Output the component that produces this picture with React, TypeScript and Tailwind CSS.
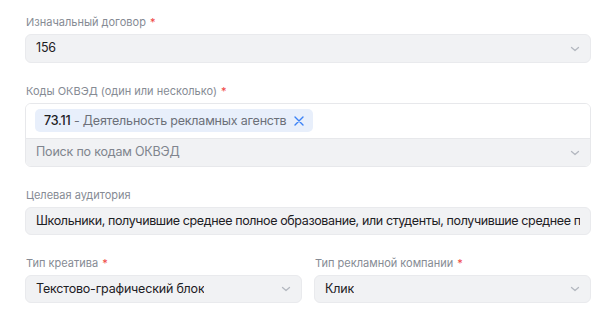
import React from "react";

const Chevron = () => (
  <svg width="12" height="12" viewBox="0 0 12 12" fill="none" className="shrink-0">
    <path d="M2.5 4.5L6 7.5L9.5 4.5" stroke="#b4b8c0" strokeWidth="1.3" strokeLinecap="round" strokeLinejoin="round" />
  </svg>
);

const Label = ({ children, required }: { children: React.ReactNode; required?: boolean }) => (
  <div className="text-[11px] leading-[16px] text-[#868b94] mb-[4px] pl-[1px]">
    {children}
    {required && <span className="text-[#ef4444] ml-[4px]">*</span>}
  </div>
);

const Select = ({ value, h }: { value: string; h: string }) => (
  <div className={`${h} flex items-center justify-between pl-[10px] pr-[9px] rounded-[6px] bg-[#f1f2f4] border border-[#e9eaed]`}>
    <span className="text-[12.5px] tracking-[-0.2px] text-[#1d2024] truncate">{value}</span>
    <Chevron />
  </div>
);

export default function App() {
  return (
    <div className="w-[616px] h-[328px] bg-white px-[25px] pt-[14px]" style={{ fontFamily: "Inter, 'Noto Sans', sans-serif" }}>
      <div>
        <Label required>Изначальный договор</Label>
        <Select value="156" h="h-[29px]" />
      </div>
      <div className="mt-[20px]">
        <Label required>Коды ОКВЭД (один или несколько)</Label>
        <div className="rounded-[6px] border border-[#e7e8eb] overflow-hidden">
          <div className="bg-white px-[9px] pt-[5px] pb-[6px] border-b border-[#e7e8eb] flex">
            <div className="flex items-center h-[23px] rounded-[5px] bg-[#e8effb] pl-[9px] pr-[9px] text-[12.5px] tracking-[-0.2px] leading-[23px]">
              <span className="text-[#1d2024] font-medium">73.11</span>
              <span className="text-[#6c7079]">&nbsp;- Деятельность рекламных агенств</span>
              <svg width="10" height="10" viewBox="0 0 10 10" className="ml-[8px]">
                <path d="M1 1L9 9M9 1L1 9" stroke="#3b82f6" strokeWidth="1.4" strokeLinecap="round" />
              </svg>
            </div>
          </div>
          <div className="h-[27px] bg-[#f1f2f4] flex items-center justify-between pl-[10px] pr-[9px]">
            <span className="text-[12.5px] tracking-[-0.2px] text-[#80858e]">Поиск по кодам ОКВЭД</span>
            <Chevron />
          </div>
        </div>
      </div>
      <div className="mt-[20px]">
        <Label>Целевая аудитория</Label>
        <div className="h-[28px] flex items-center pl-[10px] pr-[10px] rounded-[6px] bg-[#f1f2f4] border border-[#e9eaed] overflow-hidden">
          <span className="text-[12.5px] tracking-[-0.38px] text-[#1d2024] whitespace-nowrap overflow-hidden">
            Школьники, получившие среднее полное образование, или студенты, получившие среднее профессиональное образование
          </span>
        </div>
      </div>
      <div className="mt-[20px] grid grid-cols-2 gap-[12px]">
        <div>
          <Label required>Тип креатива</Label>
          <Select value="Текстово-графический блок" h="h-[28px]" />
        </div>
        <div>
          <Label required>Тип рекламной компании</Label>
          <Select value="Клик" h="h-[28px]" />
        </div>
      </div>
    </div>
  );
}
